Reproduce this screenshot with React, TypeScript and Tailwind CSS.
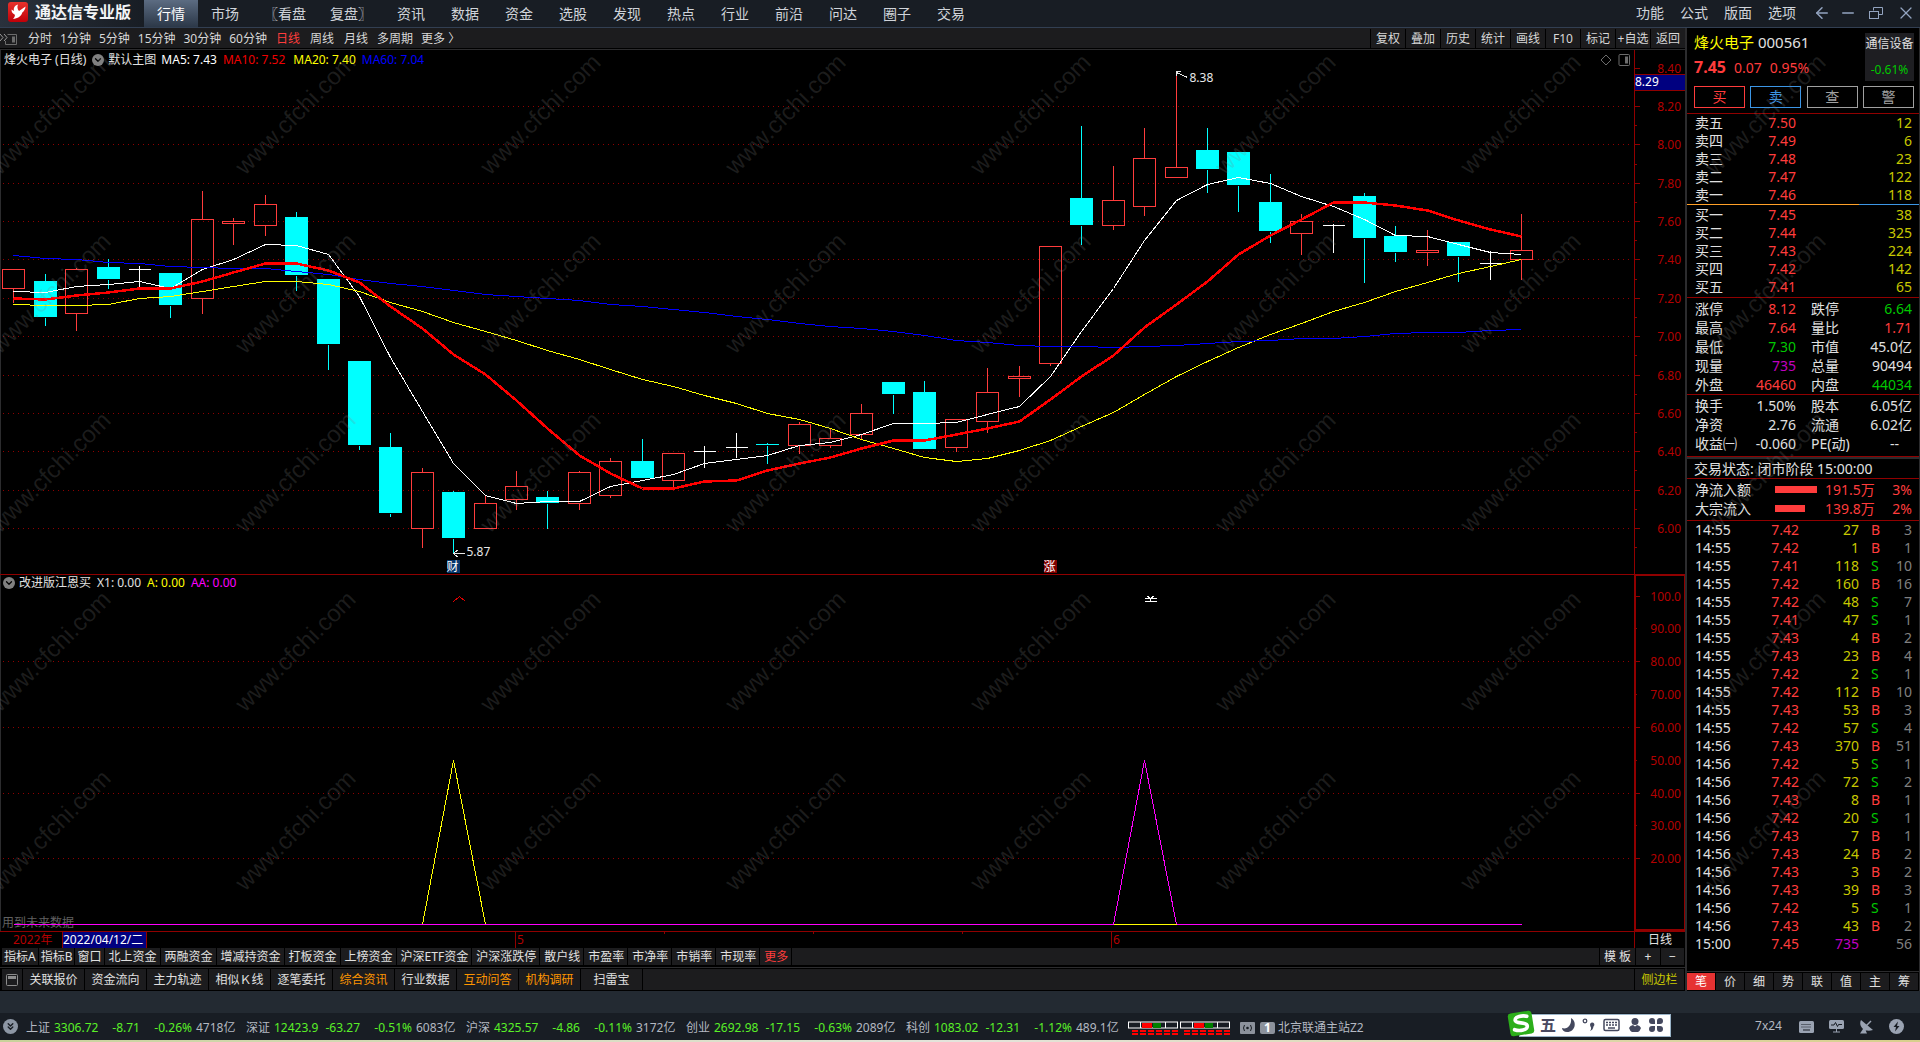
import React from 'react'
import { ArrowLeft, Minus, X, ChevronDown, ChevronsDown } from 'lucide-react'

type Candle = [open: number, close: number, high: number, low: number]

const CANDLES: Candle[] = [
  [7.25, 7.35, 7.35, 7.18], [7.29, 7.1, 7.33, 7.06], [7.12, 7.35, 7.36, 7.03], [7.36, 7.3, 7.41, 7.25],
  [7.35, 7.35, 7.37, 7.26], [7.33, 7.16, 7.33, 7.1], [7.2, 7.61, 7.76, 7.12], [7.59, 7.6, 7.62, 7.48],
  [7.58, 7.69, 7.74, 7.53], [7.62, 7.32, 7.65, 7.24], [7.3, 6.96, 7.3, 6.83], [6.87, 6.43, 6.87, 6.41],
  [6.42, 6.08, 6.5, 6.06], [6.0, 6.29, 6.32, 5.9], [6.19, 5.95, 6.2, 5.87], [6.0, 6.13, 6.17, 6.0],
  [6.15, 6.22, 6.3, 6.1], [6.16, 6.13, 6.2, 6.0], [6.13, 6.29, 6.3, 6.1], [6.17, 6.35, 6.37, 6.16],
  [6.35, 6.26, 6.47, 6.26], [6.25, 6.39, 6.39, 6.21], [6.4, 6.4, 6.43, 6.32], [6.42, 6.42, 6.5, 6.37],
  [6.44, 6.43, 6.45, 6.34], [6.43, 6.54, 6.56, 6.39], [6.43, 6.47, 6.52, 6.42], [6.49, 6.6, 6.65, 6.47],
  [6.76, 6.7, 6.76, 6.6], [6.71, 6.41, 6.77, 6.41], [6.42, 6.57, 6.57, 6.4], [6.56, 6.71, 6.84, 6.5],
  [6.78, 6.79, 6.85, 6.69], [6.86, 7.47, 7.47, 6.85], [7.72, 7.58, 8.1, 7.48], [7.58, 7.71, 7.89, 7.56],
  [7.68, 7.93, 8.09, 7.63], [7.83, 7.88, 8.38, 7.83], [7.97, 7.87, 8.09, 7.75], [7.96, 7.79, 7.96, 7.65],
  [7.7, 7.55, 7.85, 7.49], [7.54, 7.6, 7.64, 7.43], [7.58, 7.58, 7.59, 7.44], [7.73, 7.51, 7.75, 7.28],
  [7.52, 7.44, 7.58, 7.39], [7.44, 7.45, 7.56, 7.37], [7.49, 7.42, 7.49, 7.29], [7.38, 7.38, 7.45, 7.3],
  [7.4, 7.45, 7.64, 7.3],
]

const MA5 = [
  7.235, 7.23, 7.26, 7.27, 7.29, 7.25, 7.35, 7.4, 7.48, 7.475, 7.43, 7.21, 6.89, 6.61, 6.34, 6.17, 6.13, 6.14, 6.14,
  6.22, 6.25, 6.28, 6.34, 6.36, 6.38, 6.435, 6.45, 6.49, 6.545, 6.545, 6.55, 6.595, 6.635, 6.79, 7.025, 7.25, 7.5,
  7.71, 7.795, 7.83, 7.8, 7.73, 7.68, 7.61, 7.53, 7.52, 7.48, 7.44, 7.43,
]
const MA10 = [
  7.2, 7.195, 7.215, 7.23, 7.25, 7.25, 7.29, 7.335, 7.38, 7.38, 7.345, 7.28, 7.155, 7.04, 6.905, 6.805, 6.665, 6.52,
  6.38, 6.285, 6.21, 6.21, 6.245, 6.25, 6.3, 6.34, 6.37, 6.415, 6.46, 6.46, 6.49, 6.52, 6.56, 6.67, 6.79, 6.9, 7.05,
  7.17, 7.29, 7.43, 7.53, 7.61, 7.7, 7.7, 7.685, 7.66, 7.605, 7.56, 7.52,
]
const MA20 = [
  7.17, 7.16, 7.16, 7.17, 7.2, 7.21, 7.235, 7.26, 7.285, 7.29, 7.27, 7.235, 7.18, 7.13, 7.075, 7.025, 6.98, 6.93,
  6.88, 6.83, 6.775, 6.74, 6.695, 6.65, 6.6, 6.57, 6.52, 6.465, 6.415, 6.37, 6.35, 6.365, 6.405, 6.46, 6.53, 6.605,
  6.7, 6.79, 6.87, 6.945, 7.01, 7.07, 7.13, 7.18, 7.235, 7.28, 7.33, 7.365, 7.4,
]
const MA60 = [
  7.425, 7.41, 7.4, 7.385, 7.38, 7.365, 7.36, 7.355, 7.355, 7.34, 7.325, 7.3, 7.275, 7.26, 7.24, 7.22, 7.21, 7.197,
  7.187, 7.17, 7.157, 7.14, 7.125, 7.103, 7.088, 7.07, 7.055, 7.043, 7.027, 7.007, 6.98, 6.967, 6.956, 6.951, 6.948,
  6.946, 6.951, 6.956, 6.965, 6.974, 6.98, 6.988, 6.99, 7.0, 7.014, 7.02, 7.024, 7.03, 7.035,
]

const GRID = [8.2, 8.0, 7.8, 7.6, 7.4, 7.2, 7.0, 6.8, 6.6, 6.4, 6.2, 6.0]
const SUB_GRID = [100, 90, 80, 70, 60, 50, 40, 30, 20]

// scales are relative to the top of each panel
const CAPTION = 20
const barX = (i: number) => Math.floor(13.9 + i * 31.41) + 0.5
const priceY = (p: number) => Math.round(56 + (8.2 - p) * 191.8) + 0.5
const subY = (v: number) => Math.round(349 - v * 3.285) + 0.5
const toPoints = (values: number[]) => values.map((v, i) => `${barX(i)},${priceY(v)}`).join(' ')

const MENU = ['行情', '市场', '〖看盘', '复盘〗', '资讯', '数据', '资金', '选股', '发现', '热点', '行业', '前沿', '问达', '圈子', '交易']
const PERIODS = ['分时', '1分钟', '5分钟', '15分钟', '30分钟', '60分钟', '日线', '周线', '月线', '多周期']
const TOOLS = ['复权', '叠加', '历史', '统计', '画线', 'F10', '标记', '+自选', '返回']
const INDICATORS = [
  '北上资金', '两融资金', '增减持资金', '打板资金', '上榜资金', '沪深ETF资金', '沪深涨跌停', '散户线', '市盈率', '市净率', '市销率', '市现率',
]
const LINKS = ['关联报价', '资金流向', '主力轨迹', '相似Ｋ线', '逐笔委托', '综合资讯', '行业数据', '互动问答', '机构调研', '扫雷宝']
const HOT_LINKS = ['综合资讯', '互动问答', '机构调研']

const ASKS = [['卖五', '7.50', '12'], ['卖四', '7.49', '6'], ['卖三', '7.48', '23'], ['卖二', '7.47', '122'], ['卖一', '7.46', '118']]
const BIDS = [['买一', '7.45', '38'], ['买二', '7.44', '325'], ['买三', '7.43', '224'], ['买四', '7.42', '142'], ['买五', '7.41', '65']]

const RED = 'text-[#ff3c3c]'
const GREEN = 'text-[#00c800]'
const WHITE = 'text-[#e0e0e0]'
const PURPLE = 'text-[#c000c0]'

const STATS = [
  ['涨停', '8.12', RED, '跌停', '6.64', GREEN],
  ['最高', '7.64', RED, '量比', '1.71', RED],
  ['最低', '7.30', GREEN, '市值', '45.0亿', WHITE],
  ['现量', '735', PURPLE, '总量', '90494', WHITE],
  ['外盘', '46460', RED, '内盘', '44034', GREEN],
]
const STATS2 = [
  ['换手', '1.50%', WHITE, '股本', '6.05亿', WHITE],
  ['净资', '2.76', WHITE, '流通', '6.02亿', WHITE],
  ['收益㈠', '-0.060', WHITE, 'PE(动)', '-- ', WHITE],
]

const TICKS = [
  ['14:55', '7.42', '27', 'B', '3'], ['14:55', '7.42', '1', 'B', '1'], ['14:55', '7.41', '118', 'S', '10'],
  ['14:55', '7.42', '160', 'B', '16'], ['14:55', '7.42', '48', 'S', '7'], ['14:55', '7.41', '47', 'S', '1'],
  ['14:55', '7.43', '4', 'B', '2'], ['14:55', '7.43', '23', 'B', '4'], ['14:55', '7.42', '2', 'S', '1'],
  ['14:55', '7.42', '112', 'B', '10'], ['14:55', '7.43', '53', 'B', '3'], ['14:55', '7.42', '57', 'S', '4'],
  ['14:56', '7.43', '370', 'B', '51'], ['14:56', '7.42', '5', 'S', '1'], ['14:56', '7.42', '72', 'S', '2'],
  ['14:56', '7.43', '8', 'B', '1'], ['14:56', '7.42', '20', 'S', '1'], ['14:56', '7.43', '7', 'B', '1'],
  ['14:56', '7.43', '24', 'B', '2'], ['14:56', '7.43', '3', 'B', '2'], ['14:56', '7.43', '39', 'B', '3'],
  ['14:56', '7.42', '5', 'S', '1'], ['14:56', '7.43', '43', 'B', '2'], ['15:00', '7.45', '735', '', '56'],
]

const INDEXES = [
  ['上证', '3306.72', '-8.71', '-0.26%', '4718亿'],
  ['深证', '12423.9', '-63.27', '-0.51%', '6083亿'],
  ['沪深', '4325.57', '-4.86', '-0.11%', '3172亿'],
  ['创业', '2692.98', '-17.15', '-0.63%', '2089亿'],
  ['科创', '1083.02', '-12.31', '-1.12%', '489.1亿'],
]

function Logo() {
  return (
    <svg className="w-5 h-5 shrink-0" viewBox="0 0 20 20" aria-hidden="true">
      <defs>
        <linearGradient id="logo" x1="0" y1="0" x2="0" y2="1">
          <stop offset="0" stopColor="#e8322c" />
          <stop offset="1" stopColor="#c00008" />
        </linearGradient>
      </defs>
      <rect width="20" height="20" rx="3" fill="url(#logo)" />
      <path d="M10 2.500 C6.500 3.500 5.300 6 6 9 L3.500 7.500 C3.500 10 4.500 11.500 6.300 12.300 C7.500 13 7 14.800 5 17 C9.500 16.500 13.500 14 14.300 10.500 C16 9.300 17.200 7.200 17.600 4.500 L11 9 C9.300 7 9 4.800 10 2.500 Z" fill="#fff" />
    </svg>
  )
}

function Header() {
  return (
    <header className="flex items-stretch h-7 shrink-0 border-b border-[#323f52] bg-[#181d24] text-sm text-[#d0d4da]">
      <div className="flex items-center w-36 pl-2 pb-1 gap-[7px] bg-gradient-to-r from-[#2a313c] to-[#181d24]">
        <Logo />
        <h1 className="text-base leading-5 font-bold text-[#f2f4f6] whitespace-nowrap">通达信专业版</h1>
      </div>
      <nav className="flex">
        {MENU.map((name, i) => (
          <button
            key={name}
            className={`${name.length > 2 ? 'w-[66px]' : 'w-[54px]'} ${i === 0 ? 'bg-gradient-to-b from-[#5c6c82] to-[#2c3848] text-white' : ''}`}
          >
            {name}
          </button>
        ))}
      </nav>
      <nav className="flex items-center ml-auto pb-px">
        {['功能', '公式', '版面', '选项'].map(name => (
          <button key={name} className="w-11">{name}</button>
        ))}
        <div className="flex items-center text-[#93a4c0]">
          <button aria-label="后退" className="w-8 flex justify-center pl-1"><ArrowLeft className="w-[18px] h-[18px]" strokeWidth={2} /></button>
          <button aria-label="最小化" className="w-6 flex justify-center"><Minus className="w-[18px] h-[18px]" strokeWidth={2} /></button>
          <button aria-label="还原" className="w-8 flex justify-center">
            <svg className="w-[14px] h-[12px]" viewBox="0 0 14 12" fill="none" stroke="currentColor" aria-hidden="true">
              <path d="M4.500 3.500 V.5 H13.500 V7.500 H10" />
              <rect x=".5" y="4.500" width="9" height="7" />
            </svg>
          </button>
          <button aria-label="关闭" className="w-7 flex justify-center"><X className="w-5 h-5" strokeWidth={1.5} /></button>
        </div>
      </nav>
    </header>
  )
}

function PeriodBar() {
  return (
    <div className="flex items-stretch h-[21px] shrink-0 pt-px bg-[#1c1c1e] border-b border-black text-[#d8d8d8]">
      <div className="flex items-center">
        <svg className="w-5 h-[14px] mr-2" viewBox="0 0 20 14" fill="none" stroke="#6c6c6c" aria-hidden="true">
          <path d="M0 2 L3 5.500 L0 9 M4 2 L7 5.500 L4 9" stroke="#9a9a9a" />
          <path d="M7.500 2.500 H16.500 V12.500 H5.500 V9" />
          <rect x="12" y="4.500" width="3" height="6" fill="#6c6c6c" stroke="none" />
        </svg>
        <nav className="flex gap-2">
          {PERIODS.map(p => (
            <button key={p} className={`${p.endsWith('线') ? 'px-px' : ''} ${p === '日线' ? 'text-[#ff3c3c]' : ''}`}>{p}</button>
          ))}
          <button>更多 〉</button>
        </nav>
      </div>
      <div className="flex ml-auto">
        {TOOLS.map(t => (
          <button key={t} className="w-[35px] border-l border-black whitespace-nowrap">{t}</button>
        ))}
      </div>
    </div>
  )
}

function FoldButton() {
  return (
    <button aria-label="指标菜单" className="w-3 h-3 rounded-full bg-[#808080] flex items-center justify-center text-black">
      <ChevronDown className="w-[10px] h-[10px]" strokeWidth={3} />
    </button>
  )
}

function CandleShape({ candle, i }: { candle: Candle; i: number }) {
  const [open, close, high, low] = candle
  const x = barX(i)
  const top = priceY(Math.max(open, close))
  const bottom = priceY(Math.min(open, close))
  if (open === close) {
    return <path d={`M${x} ${priceY(high)} V${priceY(low)} M${x - 11} ${top} H${x + 11}`} stroke="#fff" fill="none" />
  }
  const wick = `M${x} ${priceY(high)} V${top} M${x} ${bottom} V${priceY(low)}`
  if (close > open) {
    return (
      <g stroke="#ff3c3c" fill="none">
        <path d={wick} />
        <rect x={x - 11} y={top} width={22} height={bottom - top} />
      </g>
    )
  }
  return (
    <g>
      <path d={wick} stroke="#00ffff" />
      <rect x={x - 11.5} y={top - 0.5} width={23} height={bottom - top} fill="#00ffff" />
    </g>
  )
}

function MainChart() {
  return (
    <section className="flex flex-1 min-h-0 border-t border-[#2c2c2e]">
      <div className="flex flex-col flex-1 min-w-0 border-l border-[#2c2c2e]">
        <div className="flex items-center h-5 pl-[3px] pr-1 pb-px shrink-0 text-[#e0e0e0]">
          <span className="mr-[6px]">烽火电子 (日线)</span>
          <FoldButton />
          <span className="ml-1">默认主图</span>
          <span className="ml-[5px] text-white">MA5: 7.43</span>
          <span className="ml-[6px] text-[#f00000]">MA10: 7.52</span>
          <span className="ml-2 text-[#ffff00]">MA20: 7.40</span>
          <span className="ml-[6px] text-[#0000ff]">MA60: 7.04</span>
          <svg className="w-[30px] h-3 ml-auto" viewBox="0 0 30 12" fill="none" stroke="#6c6c6c" aria-hidden="true">
            <path d="M6 1 L11 6 L6 11 L1 6 Z" />
            <rect x="19" y=".5" width="10.500" height="11" rx="1" />
            <rect x="25" y="2.500" width="3" height="7" fill="#6c6c6c" stroke="none" />
          </svg>
        </div>
        <svg className="w-full flex-1 min-h-0 overflow-hidden" aria-label="日K线">
          <g transform={`translate(-1,${-CAPTION})`} shapeRendering="crispEdges">
            {GRID.map(p => (
              <line key={p} x1="3" x2="100%" y1={priceY(p)} y2={priceY(p)} stroke="#900000" strokeDasharray="1 4" />
            ))}
            {CANDLES.map((c, i) => <CandleShape key={i} candle={c} i={i} />)}
            <g fill="none">
              <polyline points={toPoints(MA5)} stroke="#fff" />
              <polyline points={toPoints(MA20)} stroke="#ffff00" />
              <polyline points={toPoints(MA60)} stroke="#0000ff" />
              <polyline points={toPoints(MA10)} stroke="#ff0000" strokeWidth="2.500" />
            </g>
            <g fill="none" stroke="#e8e8e8">
              <path d={`M${barX(37)} 22.500 L${barX(37) + 11} 27.500 M${barX(37) + 4} 21.500 H${barX(37)} V26`} />
              <path d={`M${barX(14)} 503.500 H${barX(14) + 11} M${barX(14) + 4} 500 L${barX(14)} 503.500 L${barX(14) + 4} 507`} />
            </g>
            <rect x={barX(14) - 7} y="510" width="13" height="13" fill="#06366c" />
            <rect x={barX(33) - 7} y="510" width="13" height="13" fill="#800000" />
          </g>
          <g transform={`translate(-1,${-CAPTION})`} fill="#e8e8e8" fontSize="12">
            <text x={barX(37) + 13} y="32">8.38</text>
            <text x={barX(14) + 13} y="506">5.87</text>
            <text x={barX(14) - 7} y="521" fill="#fff">财</text>
            <text x={barX(33) - 7} y="521" fill="#fff">涨</text>
          </g>
        </svg>
      </div>
      <svg className="w-[51px] h-full shrink-0 border-l border-[#900000]" aria-label="价格坐标">
        {[8.4, ...GRID].map(p => (
          <g key={p}>
            <path d={`M0 ${priceY(p)} H5 M0 ${priceY(p - 0.1)} H2`} stroke="#900000" />
            <text x="46" y={priceY(p) + 4} textAnchor="end" fontSize="12" fill="#b40000">{p.toFixed(2)}</text>
          </g>
        ))}
        <rect x="-1" y="24.500" width="53" height="16" fill="#000080" stroke="#900000" />
        <text x="0" y="36" fontSize="12" fill="#fff">8.29</text>
      </svg>
    </section>
  )
}

function SubChart() {
  return (
    <section className="flex h-[357px] shrink-0 border-t border-[#900000]">
      <div className="flex flex-col flex-1 min-w-0 border-l border-[#2c2c2e]">
        <div className="flex items-center h-5 pl-[2px] pb-1 shrink-0 text-[#e0e0e0]">
          <FoldButton />
          <span className="ml-1">改进版江恩买</span>
          <span className="ml-[6px]">X1: 0.00</span>
          <span className="ml-[6px] text-[#ffff00]">A: 0.00</span>
          <span className="ml-[6px] text-[#ff00ff]">AA: 0.00</span>
        </div>
        <svg className="w-full flex-1 min-h-0 overflow-hidden" aria-label="改进版江恩买">
          <g transform={`translate(-1,${-CAPTION})`} fill="none">
            {[80, 60, 40, 20].map(v => (
              <line key={v} x1="3" x2="100%" y1={subY(v)} y2={subY(v)} stroke="#900000" strokeDasharray="1 4" shapeRendering="crispEdges" />
            ))}
            <text x="2" y="352" fontSize="12" fill="#606060">用到未来数据</text>
            <g shapeRendering="crispEdges">
              <path d={`M${barX(13)} ${subY(0)} L${barX(14)} ${subY(50)} L${barX(15)} ${subY(0)}`} stroke="#ffff00" />
              <path
                d={`M${barX(0)} ${subY(0)} H${barX(35)} L${barX(36)} ${subY(50)} L${barX(37)} ${subY(0)} H${barX(48)}`}
                stroke="#ff00ff"
              />
              <path d={`M${barX(35)} ${subY(0)} H${barX(37)}`} stroke="#ffff00" />
              <path d={`M${barX(14)} 26.500 L${barX(14) + 6} 21.500 L${barX(14) + 12} 26.500`} stroke="#e00000" />
              <path d={`M${barX(36)} 23.500 h12 M${barX(36)} 26.500 h12 M${barX(36) + 3} 21 l3 3 l3 -3 M${barX(36) + 6} 23 v3`} stroke="#fff" />
            </g>
          </g>
        </svg>
      </div>
      <svg className="w-[51px] h-full shrink-0 border-l-2 border-t border-b-2 border-r border-[#900000]" aria-label="指标坐标">
        {SUB_GRID.map(v => (
          <g key={v}>
            <line x1="0" x2={v % 20 === 0 ? 4 : 1} y1={subY(v) - 1} y2={subY(v) - 1} stroke="#900000" />
            <text x="45" y={subY(v) + 3} textAnchor="end" fontSize="12" fill="#b40000">
              {v === 100 ? '100.0' : v.toFixed(2)}
            </text>
          </g>
        ))}
      </svg>
    </section>
  )
}

function TimeAxis() {
  return (
    <div className="flex h-[17px] shrink-0 border-t border-[#900000]">
      <svg className="flex-1 min-w-0 h-full" fontSize="12" fill="#b40000" aria-label="时间坐标">
        <text x="13" y="12">2022年</text>
        <rect x="62" y="0" width="85" height="16" fill="#000080" />
        <text x="63" y="12" fill="#fff">2022/04/12/二</text>
        <path d="M62.500 0 V16 M146.500 0 V16 M515.500 0 V16 M664.500 0 V2 M813.500 0 V2 M962.500 0 V2 M1111.500 0 V16" stroke="#900000" />
        <text x="517" y="12">5</text>
        <text x="1113" y="12">6</text>
      </svg>
      <div className="w-[51px] border-l border-[#900000] text-center leading-4 text-[#e0e0e0]">日线</div>
    </div>
  )
}

function IndicatorTabs() {
  const cell = 'h-full border-r border-black pl-1 pr-[3px] whitespace-nowrap'
  return (
    <div className="flex h-5 shrink-0 pl-[2px] pb-px border-b border-[#2c2c2e] text-[#e0e0e0]">
      <div className="flex flex-1 bg-[#1c1c1e] border-b border-black">
        {['指标A', '指标B', '窗口'].map(name => (
          <button key={name} className="h-full border-r border-black px-[2px] whitespace-nowrap">{name}</button>
        ))}
        {INDICATORS.map(name => (
          <button key={name} className={cell}>{name}</button>
        ))}
        <button className={`${cell} text-[#ff3c3c]`}>更多</button>
        <div className="flex ml-auto">
          <button className="w-9 border-l border-black">模 板</button>
          <button className="w-[25px] border-l border-black">+</button>
          <button className="w-[25px] border-x border-black">−</button>
        </div>
      </div>
    </div>
  )
}

function LinkTabs() {
  return (
    <div className="flex h-[23px] shrink-0 pl-[2px] py-px bg-black text-[#e0e0e0]">
      <div className="flex flex-1 bg-[#1c1c1e]">
        <button aria-label="面板" className="w-[21px] border-r border-black flex items-center justify-center">
          <svg className="w-3 h-3" viewBox="0 0 12 12" fill="none" stroke="#8c8c8c" aria-hidden="true">
            <rect x=".5" y=".5" width="11" height="11" rx="1" />
            <rect x="2" y="2" width="8" height="3" fill="#8c8c8c" stroke="none" />
          </svg>
        </button>
        {LINKS.map(name => (
          <button key={name} className={`w-[62px] border-r border-black ${HOT_LINKS.includes(name) ? 'text-[#ff9600]' : ''}`}>
            {name}
          </button>
        ))}
        <button className="w-[51px] ml-auto border-x border-black text-[#c8c800]">侧边栏</button>
      </div>
    </div>
  )
}

function BookTable({ rows, label }: { rows: string[][]; label: string }) {
  return (
    <table className="w-full table-fixed" aria-label={label}>
      <tbody>
        {rows.map(([name, price, volume]) => (
          <tr key={name} className="h-[18px]">
            <th className="w-[60px] pl-2 text-left font-normal text-[#e0e0e0]">{name}</th>
            <td className="w-[49px] text-right text-[#ff3c3c]">{price}</td>
            <td className="pr-[7px] text-right text-[#c8c800]">{volume}</td>
          </tr>
        ))}
      </tbody>
    </table>
  )
}

function StatTable({ rows, label }: { rows: string[][]; label: string }) {
  return (
    <div className="border-t border-[#900000] pt-px">
      <table className="w-full table-fixed" aria-label={label}>
        <tbody>
          {rows.map(([a, av, ac, b, bv, bc]) => (
            <tr key={a} className="h-[19px] whitespace-nowrap">
              <th className="w-[54px] pl-2 text-left font-normal text-[#e0e0e0]">{a}</th>
              <td className={`w-[55px] text-right ${ac}`}>{av}</td>
              <th className="w-[58px] pl-[15px] text-left font-normal text-[#e0e0e0]">{b}</th>
              <td className={`text-right ${bv === '-- ' ? 'pr-5' : 'pr-[7px]'} ${bc}`}>{bv}</td>
            </tr>
          ))}
        </tbody>
      </table>
    </div>
  )
}

function QuotePanel() {
  return (
    <aside className="flex flex-col w-[235px] shrink-0 border-l-2 border-r border-[#2c2c2e] bg-black text-sm leading-[18px]">
      <div className="h-[85px] pl-[7px] pr-[5px] flex flex-col justify-between pb-[5px] pt-[5px]">
        <div className="flex justify-between">
          <div className="whitespace-nowrap">
            <h2 className="text-[15px] leading-[18px] text-[#e0e0e0]">
              <span className="text-[#ffff00]">烽火电子</span> 000561
            </h2>
            <div className="flex items-baseline gap-2 mt-1 leading-6 text-[#ff3c3c]">
              <strong className="text-base">7.45</strong>
              <span>0.07</span>
              <span>0.95%</span>
            </div>
          </div>
          <a href="#sector" className="flex flex-col justify-between w-[49px] h-12 py-[3px] bg-[#1e1e22] text-xs text-center text-[#e0e0e0] whitespace-nowrap">
            <span>通信设备</span>
            <span className="text-[#00c800]">-0.61%</span>
          </a>
        </div>
        <div className="flex justify-between">
          <button className="w-[51px] h-[22px] border border-[#ff3c3c] text-[#ff3c3c]">买</button>
          <button className="w-[51px] h-[22px] border border-[#3c96e6] text-[#3c96e6]">卖</button>
          <button className="w-[51px] h-[22px] border border-[#a0a0a0] text-[#a0a0a0]">查</button>
          <button className="w-[51px] h-[22px] border border-[#a0a0a0] text-[#a0a0a0]">警</button>
        </div>
      </div>
      <div className="border-t border-[#900000]">
        <BookTable rows={ASKS} label="卖盘" />
      </div>
      <div className="flex h-px">
        <span className="w-[74%] bg-[#ffa028]" />
        <span className="flex-1 bg-[#3c96e6]" />
      </div>
      <div className="py-px">
        <BookTable rows={BIDS} label="买盘" />
      </div>
      <StatTable rows={STATS} label="行情数据" />
      <div className="pb-[3px] border-b border-[#900000]">
        <StatTable rows={STATS2} label="财务数据" />
      </div>
      <p className="h-[21px] leading-[19px] pl-[7px] border-t-2 border-[#2c2c2e] text-[#e0e0e0]">交易状态: 闭市阶段 15:00:00</p>
      <div className="pt-px pb-[2px] border-y border-[#900000]">
        <table className="w-full table-fixed text-[#ff3c3c]" aria-label="资金流向">
          <tbody>
            {[['净流入额', 42, '191.5万', '3%'], ['大宗流入', 30, '139.8万', '2%']].map(([name, width, amount, pct]) => (
              <tr key={name} className="h-[19px]">
                <th className="w-[88px] pl-2 text-left font-normal text-[#e0e0e0]">{name}</th>
                <td className="w-[46px]"><div className="h-[7px] bg-[#ff3c3c]" style={{ width: Number(width) }} /></td>
                <td className="pl-1">{amount}</td>
                <td className="w-[34px] pr-[7px] text-right">{pct}</td>
              </tr>
            ))}
          </tbody>
        </table>
      </div>
      <table className="w-full table-fixed" aria-label="分笔成交">
        <tbody>
          {TICKS.map(([time, price, volume, side, count], i) => (
            <tr key={i} className="h-[18px]">
              <td className="w-[60px] pl-2 text-[#e0e0e0]">{time}</td>
              <td className="w-[52px] text-right text-[#ff3c3c]">{price}</td>
              <td className={`w-[60px] text-right ${side ? 'text-[#c8c800]' : 'text-[#c000c0]'}`}>{volume}</td>
              <td className={`w-[22px] pl-3 ${side === 'B' ? 'text-[#ff3c3c]' : 'text-[#00c800]'}`}>{side}</td>
              <td className="pr-[7px] text-right text-[#808080]">{count}</td>
            </tr>
          ))}
        </tbody>
      </table>
      <div className="flex mt-auto h-5 pt-px pb-px border-t border-[#2c2c2e] text-xs text-[#e0e0e0]">
        {['笔', '价', '细', '势', '联', '值', '主', '筹'].map((name, i) => (
          <button key={name} className={`flex-1 border-r border-black ${i === 0 ? 'bg-[#e63232] text-white' : 'bg-[#1c1c1e]'}`}>
            {name}
          </button>
        ))}
      </div>
    </aside>
  )
}

function Watermark() {
  const cells = [148, 327, 506, 685, 864].flatMap(y => [0, 1, 2, 3, 4, 5, 6, 7].map(col => ({ x: col * 245, y })))
  return (
    <svg className="absolute inset-0 w-full h-full pointer-events-none" aria-hidden="true">
      <g fill="#808080" fillOpacity="0.22" fontSize="24" fontFamily="Liberation Sans, Arial, sans-serif">
        {cells.map(({ x, y }) => (
          <text key={`${x}-${y}`} transform={`translate(${x},${y}) rotate(-45)`}>www.cfchi.com</text>
        ))}
      </g>
    </svg>
  )
}

function LoadMeter() {
  return (
    <svg className="w-[51px] h-[14px] mr-px" viewBox="0 0 51 14" aria-hidden="true">
      <rect x=".5" y="1" width="49" height="6" fill="#181d24" stroke="#fff" />
      <path d="M12.500 1 V7 M37.500 1 V7" stroke="#fff" />
      <rect x="14" y="2" width="10" height="5" fill="#f00" />
      <rect x="25" y="2" width="8" height="5" fill="#008000" />
      <path d="M4 10 H50 M4 13 H50" stroke="#f00" strokeWidth="2" strokeDasharray="6 2" />
    </svg>
  )
}

function InputMethodBar() {
  return (
    <div className="absolute right-[249px] -top-[3px] flex items-center h-[27px]">
      <svg className="relative z-10 w-7 h-[27px] -mr-4" viewBox="0 0 28 27" aria-hidden="true">
        <rect x="2" y="2" width="24" height="23" rx="3" fill="#2cae1a" transform="rotate(-9 14 13.500)" />
        <path
          d="M20.500 7 C16 5.200 8.500 6 8.500 9.700 C8.500 14 20 11.800 20 16.500 C20 20.600 12 21.500 7 19"
          fill="none" stroke="#fff" strokeWidth="3.600" strokeLinecap="round" transform="rotate(-6 14 13.500)"
        />
      </svg>
      <div className="flex items-center w-[152px] h-[23px] mt-[3px] pl-5 gap-[6px] bg-white border border-[#9ab4c8] text-[#4a4a60]">
        <span className="w-4 text-base leading-5 font-bold">五</span>
        <svg className="w-[104px] h-4 shrink-0" viewBox="0 0 104 16" fill="#44485e" aria-hidden="true">
          <path d="M9 1 C15 4 14 15 5 15 C2 15 0 13 0 11 C5 13 10 8 9 1 Z" />
          <circle cx="23" cy="4" r="1.800" fill="none" stroke="#44485e" strokeWidth="1.300" />
          <path d="M28 7.500 a2.200 2.200 0 1 1 3.500 2 Q31 13 28 14 Q29.500 12 29 10.500 Q28 9 28 7.500 Z" />
          <rect x="42" y="2.500" width="15" height="11" rx="1.500" fill="none" stroke="#44485e" strokeWidth="1.500" />
          <path d="M44 5.500 H55 M44 8 H55" stroke="#44485e" strokeWidth="1.500" strokeDasharray="2 1" />
          <path d="M46 11 H53" stroke="#44485e" strokeWidth="1.500" />
          <circle cx="73" cy="4.500" r="3.500" />
          <path d="M67 11 Q68 8.500 71 8 L73 9.500 L75 8 Q78 8.500 79 11 Q78 14 76 15 H70 Q68 14 67 11 Z" />
          <path d="M87 4 a3 3 0 0 1 6 0 V7 H90 A3 3 0 0 1 87 4 Z M95 7 V4 a3 3 0 1 1 3 3 Z M93 9 V12 a3 3 0 1 1 -3 -3 Z M95 9 H98 a3 3 0 1 1 -3 3 Z" />
        </svg>
      </div>
    </div>
  )
}

function StatusBar() {
  return (
    <footer className="relative flex items-center h-[27px] shrink-0 bg-[#181d24] text-[#b4b9c2] whitespace-nowrap">
      <button aria-label="展开" className="flex items-center justify-center w-[15px] h-[15px] ml-[3px] mr-2 rounded-full bg-[#8c96a4] text-[#181d24]">
        <ChevronsDown className="w-[11px] h-[11px]" strokeWidth={3} />
      </button>
      {INDEXES.map(([name, price, change, pct, amount]) => (
        <div key={name} className="flex w-[220px] pt-[2px] text-[#5af028]">
          <span className="w-7 text-[#b4b9c2]">{name}</span>
          <span className="w-[46px]">{price}</span>
          <span className="w-[40px] text-right">{change}</span>
          <span className="w-[52px] text-right">{pct}</span>
          <span className="pl-1 text-[#b4b9c2]">{amount}</span>
        </div>
      ))}
      <div className="flex items-center pl-[2px] pt-[2px]">
        <LoadMeter />
        <LoadMeter />
        <svg className="w-[15px] h-3 ml-2" viewBox="0 0 15 12" aria-hidden="true">
          <rect width="15" height="12" rx="1" fill="#8c929c" />
          <path d="M4.500 3 Q2.500 6 4.500 9 M10.500 3 Q12.500 6 10.500 9" fill="none" stroke="#181d24" />
          <circle cx="7.500" cy="6" r="1.300" fill="#181d24" />
        </svg>
        <span className="w-[15px] h-3 ml-[5px] mr-[3px] rounded-xs bg-[#8c929c] text-white font-bold leading-3 text-center">1</span>
        <span>北京联通主站Z2</span>
      </div>
      <InputMethodBar />
      <div className="flex items-center ml-auto pr-4 gap-[15px] text-[#9aa3b2]">
        <span className="mr-[2px] pb-[2px] text-[#b4b9c2]">7x24</span>
        <svg className="w-[15px] h-3" viewBox="0 0 15 12" aria-hidden="true">
          <rect width="15" height="12" rx="1.500" fill="currentColor" />
          <path d="M2.500 3.500 H12.500 M2.500 6 H12.500" stroke="#181d24" strokeDasharray="1 1" />
          <path d="M4 9 H11" stroke="#181d24" />
        </svg>
        <svg className="w-[15px] h-[13px]" viewBox="0 0 15 13" aria-hidden="true">
          <rect width="15" height="9" rx="1.500" fill="currentColor" />
          <path d="M2 5 H5 L6.500 2.500 L8.500 6.500 L9.500 4.500 H13" fill="none" stroke="#181d24" />
          <path d="M7.500 9 V12 M4 12 H11" stroke="currentColor" />
        </svg>
        <svg className="w-[15px] h-[15px]" viewBox="0 0 15 15" aria-hidden="true">
          <path d="M2 1 C-1 7 5 14 14 11 Z M1 14.500 H8 L6 10 H4 Z" fill="currentColor" />
          <path d="M7 7 L12 2" stroke="currentColor" strokeWidth="1.500" />
        </svg>
        <svg className="w-[15px] h-[15px]" viewBox="0 0 15 15" aria-hidden="true">
          <circle cx="7.500" cy="7.500" r="7.500" fill="currentColor" />
          <path d="M9 2.500 L4.500 8 H7 L6 12.500 L10.500 7 H8 Z" fill="#181d24" />
        </svg>
      </div>
    </footer>
  )
}

export default function App() {
  return (
    <div className="flex flex-col h-screen overflow-hidden bg-black text-xs leading-4 font-['Noto_Sans','Noto_Sans_CJK_SC',sans-serif]">
      <Header />
      <div className="relative flex flex-1 min-h-0">
        <main className="flex flex-col flex-1 min-w-0">
          <PeriodBar />
          <MainChart />
          <SubChart />
          <TimeAxis />
          <IndicatorTabs />
          <LinkTabs />
        </main>
        <QuotePanel />
        <Watermark />
      </div>
      <div className="h-[22px] shrink-0 bg-[#232a32]" />
      <StatusBar />
      <div className="h-[2px] shrink-0 bg-gradient-to-r from-[#c8d29a] via-[#e4e4dc] to-[#d8cf8c]" />
    </div>
  )
}
